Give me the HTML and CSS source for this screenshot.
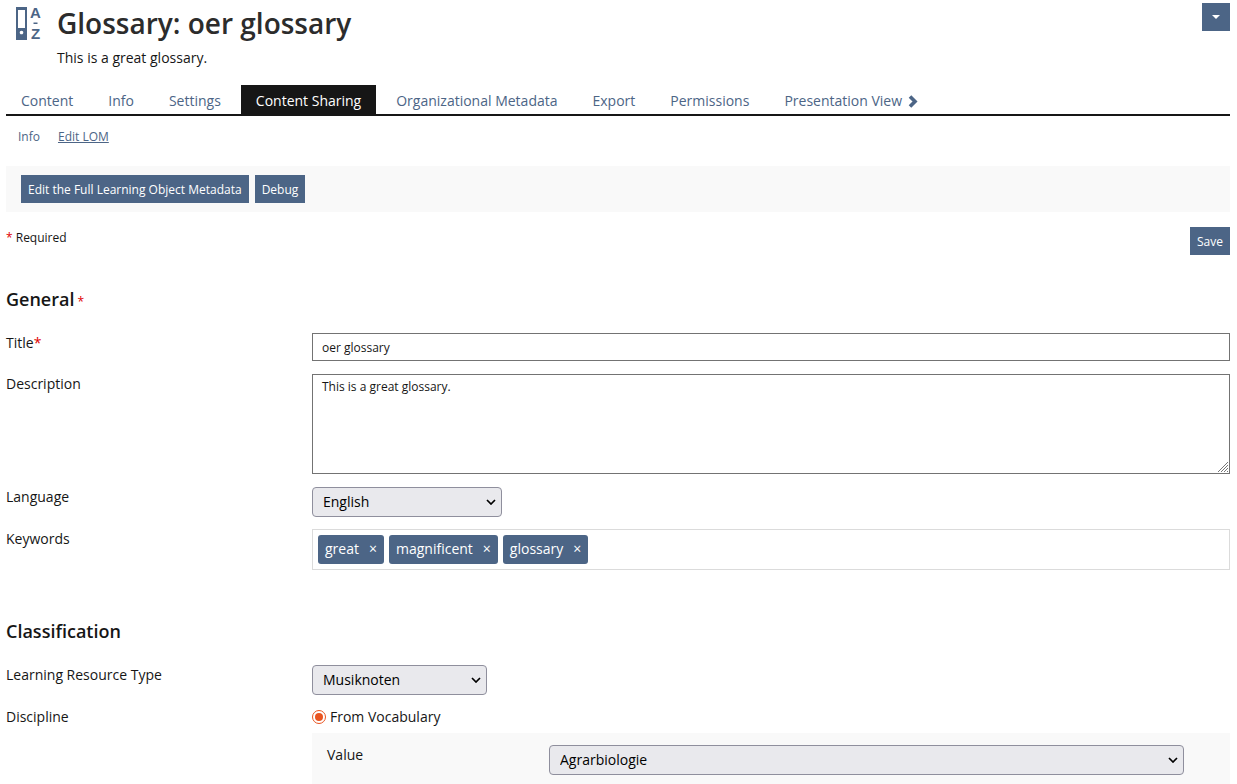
FILE: index.html
```
<!DOCTYPE html>
<html lang="en">
<head>
    <meta charset="UTF-8">
    <meta content="width=device-width, initial-scale=1.0" name="viewport">
    <title>Glossary: oer glossary</title>
    <link rel="stylesheet" href="styles.css">
</head>
<body>
<header class="page-header">
    <svg class="page-icon" width="30" height="39" viewBox="0 -3 30 39" aria-hidden="true">
        <path fill="#4c6586" fill-rule="evenodd" d="M1 1h11v33H1zM3 4v18h7V4zM6.500 24.700a1.800 1.800 0 1 0 0.010 0z"/>
        <path fill="#4c6586" d="M18.500 16.500h4v1.500h-4z"/>
        <text x="20.500" y="12">A</text>
        <text x="20.500" y="33">Z</text>
    </svg>
    <div class="page-title">
        <h1>Glossary: oer glossary</h1>
        <p>This is a great glossary.</p>
    </div>
    <button class="btn btn-menu" type="button" aria-label="Actions"><span class="caret"></span></button>
</header>

<nav class="tabs">
    <a href="#">Content</a>
    <a href="#">Info</a>
    <a href="#">Settings</a>
    <a href="#" class="active">Content Sharing</a>
    <a href="#">Organizational Metadata</a>
    <a href="#">Export</a>
    <a href="#">Permissions</a>
    <a href="#">Presentation View
        <svg width="10" height="13" viewBox="0 0 10 13" aria-hidden="true"><path d="M2 1.500 7 6.500 2 11.500" fill="none" stroke="#4c6586" stroke-width="3.600"/></svg></a>
</nav>
<nav class="subtabs">
    <a href="#">Info</a>
    <a href="#" class="active">Edit LOM</a>
</nav>

<div class="toolbar">
    <button class="btn" type="button">Edit the Full Learning Object Metadata</button>
    <button class="btn" type="button">Debug</button>
</div>

<form>
    <div class="form-top">
        <span class="required-note"><span class="asterisk">*</span> Required</span>
        <button class="btn" type="submit">Save</button>
    </div>

    <section>
        <h2>General<span class="asterisk">*</span></h2>
        <div class="row row-text">
            <label for="title">Title<span class="asterisk">*</span></label>
            <input id="title" name="title" type="text" value="oer glossary" required>
        </div>
        <div class="row row-text">
            <label for="description">Description</label>
            <textarea id="description" name="description">This is a great glossary.</textarea>
        </div>
        <div class="row">
            <label for="language">Language</label>
            <select id="language" class="select-language" name="language">
                <option>English</option>
            </select>
        </div>
        <div class="row">
            <label for="keywords">Keywords</label>
            <div class="tags">
                <span class="tag">great<button type="button" aria-label="Remove great">×</button></span>
                <span class="tag">magnificent<button type="button" aria-label="Remove magnificent">×</button></span>
                <span class="tag">glossary<button type="button" aria-label="Remove glossary">×</button></span>
                <input id="keywords" class="tag-input" name="keywords" type="text">
            </div>
        </div>
    </section>

    <section>
        <h2>Classification</h2>
        <div class="row">
            <label for="resource_type">Learning Resource Type</label>
            <select id="resource_type" class="select-type" name="resource_type">
                <option>Musiknoten</option>
            </select>
        </div>
        <div class="row" role="group" aria-labelledby="discipline_label">
            <span id="discipline_label">Discipline</span>
            <div>
                <div class="radio">
                    <input id="from_vocabulary" name="discipline" type="radio" checked>
                    <label for="from_vocabulary">From Vocabulary</label>
                </div>
                <div class="subform">
                    <label for="value">Value</label>
                    <select id="value" name="value">
                        <option>Agrarbiologie</option>
                    </select>
                </div>
            </div>
        </div>
    </section>
</form>
</body>
</html>
```

FILE: styles.css
```
* {
    box-sizing: border-box;
}
body {
    margin: 0;
    padding: 0 7px 0 6px;
    font-family: "Open Sans", sans-serif;
    font-size: 14px;
    line-height: 20px;
    color: #161616;
    background-color: #fff;
}
a {
    color: #4c6586;
    text-decoration: none;
}
h1, h2, p {
    margin: 0;
}
h1 {
    font-size: 28px;
    line-height: 38px;
    font-weight: 600;
    color: #2c2c2c;
}
h2 {
    margin-bottom: 24px;
    font-size: 18px;
    line-height: 20px;
    font-weight: 600;
}
input, textarea, select, button {
    font-family: inherit;
    color: inherit;
}
.asterisk {
    color: #e00000;
}
h2 .asterisk {
    margin-left: 3px;
    font-size: 12px;
    line-height: 12px;
    font-weight: 400;
}

/* header */
.page-header {
    display: flex;
    align-items: flex-start;
    padding: 3px 0 0 9px;
}
.page-icon {
    margin-right: 12px;
    flex: none;
}
.page-icon text {
    font: bold 15px "Liberation Sans", sans-serif;
    fill: #4c6586;
    text-anchor: middle;
}
.page-title {
    flex: 1;
    padding-top: 1px;
}
.page-title p {
    padding-top: 6px;
}

/* buttons */
.btn {
    height: 28px;
    padding: 2px 7px 0;
    border: none;
    font-size: 12px;
    line-height: 16px;
    color: #fff;
    background-color: #4c6586;
    cursor: pointer;
}
.btn:hover {
    background-color: #3a4c65;
}
.btn-menu {
    display: flex;
    align-items: center;
    justify-content: center;
    width: 28px;
    padding: 0;
}
.caret {
    border-top: 4px solid #fff;
    border-left: 4px solid transparent;
    border-right: 4px solid transparent;
}

/* navigation */
.tabs {
    display: flex;
    gap: 5px;
    margin-top: 17px;
    border-bottom: 2px solid #161616;
}
.tabs a {
    padding: 6px 15px 3px;
}
.tabs svg {
    margin-left: 2px;
    vertical-align: -2px;
}
.tabs .active {
    color: #fff;
    background-color: #161616;
}
.subtabs {
    display: flex;
    gap: 18px;
    padding: 11px 12px 19px;
    font-size: 12px;
}
.subtabs .active {
    text-decoration: underline;
}
.toolbar {
    display: flex;
    gap: 6px;
    padding: 9px 15px;
    background-color: #f9f9f9;
}

/* form */
.form-top {
    display: flex;
    justify-content: space-between;
    margin: 15px 0 34px;
}
.required-note {
    padding-top: 1px;
    font-size: 12px;
}
section + section {
    margin-top: 51px;
}
.row, .subform {
    display: grid;
    grid-template-columns: 25% 75%;
    align-items: start;
}
.row + .row {
    margin-top: 12px;
}
.row-text + .row {
    margin-top: 13px;
}
.row > input, textarea {
    display: block;
    width: 100%;
    border: 1px solid #737373;
    border-radius: 0;
    font-size: 12px;
    line-height: 16px;
    background-color: #fff;
}
.row > input {
    height: 28px;
    padding: 0 9px;
}
textarea {
    height: 100px;
    padding: 4px 9px;
    resize: vertical;
}
textarea::-webkit-resizer {
    background: url("data:image/svg+xml,%3Csvg xmlns='http://www.w3.org/2000/svg' width='12' height='12'%3E%3Cpath d='M1 11 11 1M4 11l7-7M7 11l4-4M10 11l1-1' stroke='%23777'/%3E%3C/svg%3E") no-repeat right bottom;
}
select {
    appearance: none;
    height: 30px;
    padding: 0 28px 2px 10px;
    border: 1px solid #8f8f9d;
    border-radius: 4px;
    font-size: 14px;
    color: #000;
    background: #e9e9ed url("data:image/svg+xml,%3Csvg xmlns='http://www.w3.org/2000/svg' width='10' height='6'%3E%3Cpath d='M1 1l4 4 4-4' fill='none' stroke='%23000' stroke-width='1.700'/%3E%3C/svg%3E") no-repeat right 5px center;
}
.select-language {
    width: 190px;
}
.select-type {
    width: 175px;
}

/* keywords */
.tags {
    display: flex;
    gap: 5px;
    padding: 5px;
    border: 1px solid #dbdbdb;
}
.tag {
    display: flex;
    align-items: center;
    height: 29px;
    padding: 0 0 2px 7px;
    border-radius: 3px;
    color: #fff;
    background-color: #4c6586;
}
.tag button {
    padding: 0 7px;
    margin-left: 3px;
    border: none;
    font-size: 14px;
    line-height: 20px;
    background: none;
    cursor: pointer;
}
.tag-input {
    flex: 1;
    min-width: 0;
    border: none;
    outline: none;
    font-size: 14px;
    background: none;
}

.radio {
    display: flex;
    align-items: center;
    gap: 4px;
}
.radio input {
    appearance: none;
    width: 14px;
    height: 14px;
    margin: 0;
    padding: 2px;
    border: 1px solid #e95420;
    border-radius: 50%;
}
.radio input::before {
    content: "";
    display: block;
    height: 8px;
    border-radius: 50%;
}
.radio input:checked::before {
    background-color: #e95420;
}
.subform {
    margin-top: 6px;
    padding: 12px 15px 9px;
    background-color: #f9f9f9;
}
.subform select {
    margin-right: 31px;
}
```
